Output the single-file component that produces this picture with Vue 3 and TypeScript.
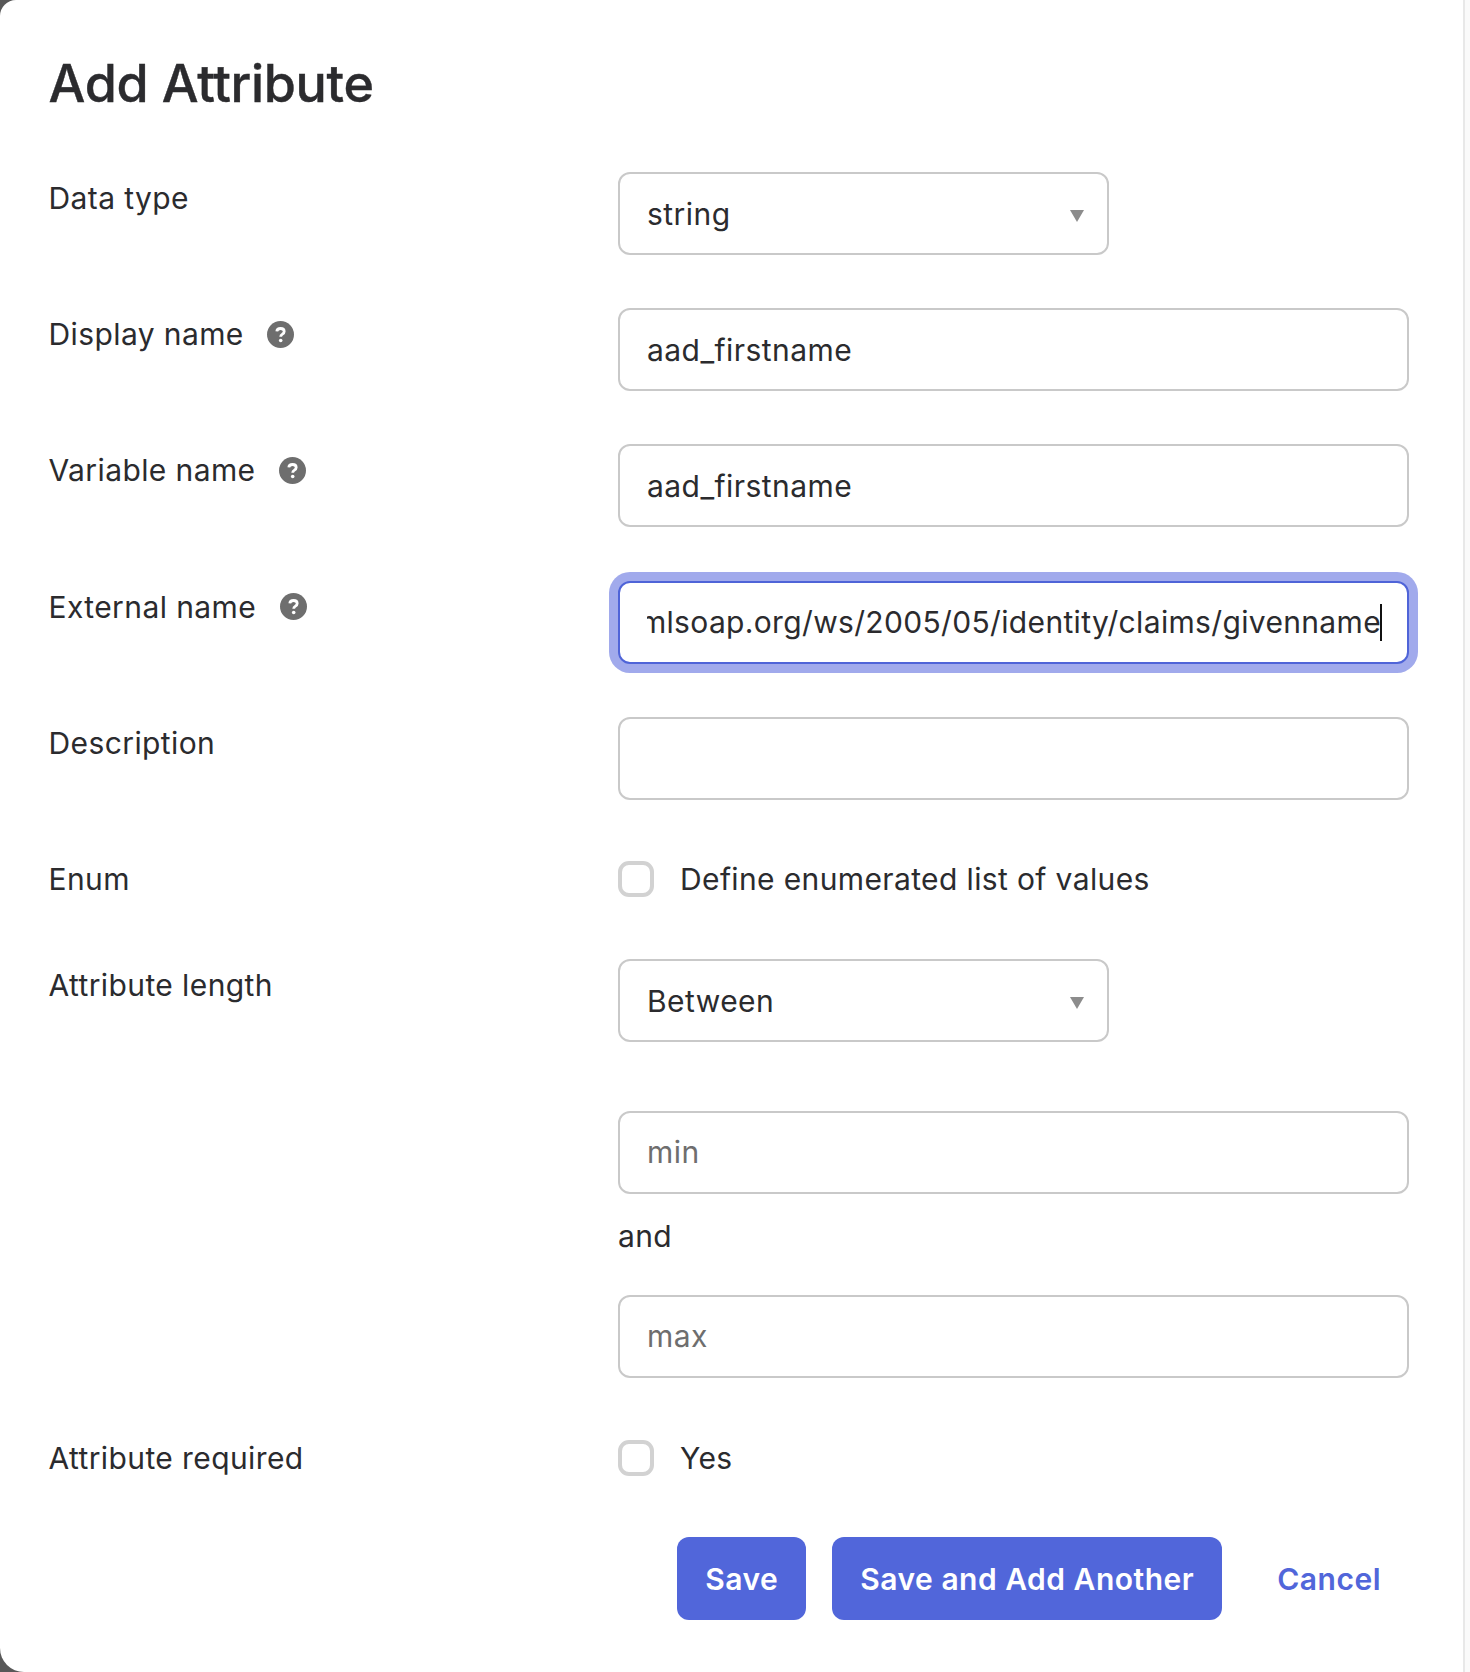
<script setup lang="ts">
import { onMounted, ref } from 'vue'

const externalInput = ref<HTMLInputElement | null>(null)
const externalName = 'http://schemas.xmlsoap.org/ws/2005/05/identity/claims/givenname'

onMounted(() => {
  if (externalInput.value) externalInput.value.scrollLeft = externalInput.value.scrollWidth
})
</script>

<template>
  <div class="backdrop">
    <main class="dialog">
      <h1 class="title">Add Attribute</h1>
      <form class="form" @submit.prevent>
        <div class="row">
          <div class="label">Data type</div>
          <div class="select">string<span class="arrow"></span></div>
        </div>
        <div class="row">
          <div class="label">Display name
            <svg class="help" viewBox="0 0 27 27"><circle cx="13.5" cy="13.5" r="13.5" fill="#6e6e6e" /><path d="M9.8 10.4c.2-1.7 1.7-2.9 3.7-2.9 2.1 0 3.7 1.2 3.7 2.9 0 1.3-.8 2-1.8 2.7-1.1.7-1.7 1.3-1.7 2.6" fill="none" stroke="#fff" stroke-width="2.8" /><circle cx="13.7" cy="19.5" r="1.8" fill="#fff" /></svg>
          </div>
          <input class="input" value="aad_firstname" readonly />
        </div>
        <div class="row">
          <div class="label">Variable name
            <svg class="help" viewBox="0 0 27 27"><circle cx="13.5" cy="13.5" r="13.5" fill="#6e6e6e" /><path d="M9.8 10.4c.2-1.7 1.7-2.9 3.7-2.9 2.1 0 3.7 1.2 3.7 2.9 0 1.3-.8 2-1.8 2.7-1.1.7-1.7 1.3-1.7 2.6" fill="none" stroke="#fff" stroke-width="2.8" /><circle cx="13.7" cy="19.5" r="1.8" fill="#fff" /></svg>
          </div>
          <input class="input" value="aad_firstname" readonly />
        </div>
        <div class="row">
          <div class="label">External name
            <svg class="help" viewBox="0 0 27 27"><circle cx="13.5" cy="13.5" r="13.5" fill="#6e6e6e" /><path d="M9.8 10.4c.2-1.7 1.7-2.9 3.7-2.9 2.1 0 3.7 1.2 3.7 2.9 0 1.3-.8 2-1.8 2.7-1.1.7-1.7 1.3-1.7 2.6" fill="none" stroke="#fff" stroke-width="2.8" /><circle cx="13.7" cy="19.5" r="1.8" fill="#fff" /></svg>
          </div>
          <div class="focus-wrap">
            <input ref="externalInput" class="input focused" :value="externalName" readonly />
            <span class="caret"></span>
          </div>
        </div>
        <div class="row">
          <div class="label">Description</div>
          <input class="input" readonly />
        </div>
        <div class="row inline-row">
          <div class="label">Enum</div>
          <label class="check"><span class="box"></span>Define enumerated list of values</label>
        </div>
        <div class="row length-row">
          <div class="label">Attribute length</div>
          <div class="select">Between<span class="arrow"></span></div>
        </div>
        <div class="row">
          <div class="label"></div>
          <div class="range">
            <input class="input" placeholder="min" readonly />
            <div class="and">and</div>
            <input class="input" placeholder="max" readonly />
          </div>
        </div>
        <div class="row inline-row">
          <div class="label">Attribute required</div>
          <label class="check"><span class="box"></span>Yes</label>
        </div>
        <div class="actions">
          <button class="btn primary" type="button">Save</button>
          <button class="btn primary" type="button">Save and Add Another</button>
          <button class="btn link" type="button">Cancel</button>
        </div>
      </form>
    </main>
    <div class="scrollbar"></div>
  </div>
</template>

<style>
body {
  margin: 0;
}
</style>

<style scoped>
.backdrop {
  display: flex;
  width: 1470px;
  height: 1672px;
  background: #585858;
  font-family: Inter, "Liberation Sans", sans-serif;
  color: #2b2b2e;
  overflow: hidden;
}
.dialog {
  flex: 1;
  box-sizing: border-box;
  background: #fff;
  border-radius: 16px 0 0 24px;
  padding: 53px 54px 0 48.5px;
}
.scrollbar {
  width: 8px;
  background: #fafafa;
  border-left: 2px solid #e8e8e8;
  box-sizing: border-box;
}
.title {
  margin: 0 0 57px;
  font-size: 52px;
  line-height: 62px;
  font-weight: 500;
  letter-spacing: -0.32px;
  -webkit-text-stroke: 0.4px #2b2b2e;
}
.form {
  display: flex;
  flex-direction: column;
  gap: 53.2px;
}
.row {
  display: flex;
  align-items: flex-start;
}
.inline-row {
  align-items: center;
}
.inline-row .label {
  padding-top: 0;
}
.length-row {
  margin-bottom: 15.5px;
}
.label {
  width: 569.5px;
  flex: none;
  padding-top: 7px;
  font-size: 30px;
  line-height: 38px;
  letter-spacing: 0.4px;
  display: flex;
  align-items: center;
  gap: 23.5px;
}
.help {
  width: 27px;
  height: 27px;
  flex: none;
}
.input,
.select {
  box-sizing: border-box;
  height: 83px;
  border: 2px solid #c9c9c9;
  border-radius: 12px;
  background: #fff;
  font-family: inherit;
  font-size: 30px;
  letter-spacing: 0.45px;
  color: #2b2b2e;
  padding: 0 27px;
  outline: none;
}
.input {
  display: block;
  width: 791px;
}
.input::placeholder {
  color: #6e6e6e;
  opacity: 1;
}
.select {
  width: 491px;
  display: flex;
  align-items: center;
  justify-content: space-between;
}
.arrow {
  width: 0;
  height: 0;
  margin: 4px -4px 0 0;
  border-left: 7px solid transparent;
  border-right: 7px solid transparent;
  border-top: 12px solid #8c8c8c;
}
.focus-wrap {
  position: relative;
  height: 83px;
}
.focused {
  border-color: #4f64d8;
  box-shadow: 0 0 0 9px #a1aaec;
  letter-spacing: 0.34px;
  padding-right: 26px;
}
.caret {
  position: absolute;
  right: 27px;
  top: 23px;
  width: 2px;
  height: 37px;
  background: #111;
}
.check {
  display: flex;
  align-items: center;
  gap: 26px;
  height: 53px;
  font-size: 30px;
  letter-spacing: 0.37px;
}
.box {
  box-sizing: border-box;
  width: 36px;
  height: 36px;
  border: 4.5px solid #d2d2d2;
  border-radius: 11px;
  background: #fff;
}
.range {
  display: flex;
  flex-direction: column;
}
.and {
  box-sizing: border-box;
  height: 101px;
  padding-top: 23px;
  font-size: 30px;
  line-height: 38px;
  letter-spacing: 0.4px;
}
.actions {
  display: flex;
  justify-content: flex-end;
  gap: 26px;
}
.btn {
  height: 83px;
  border: 0;
  border-radius: 12px;
  font-family: inherit;
  font-size: 30px;
  font-weight: 600;
  letter-spacing: 0.5px;
  padding: 0 28px;
}
.primary {
  background: #5166da;
  color: #fff;
}
.link {
  background: transparent;
  color: #5166da;
  padding-left: 29px;
}
</style>
